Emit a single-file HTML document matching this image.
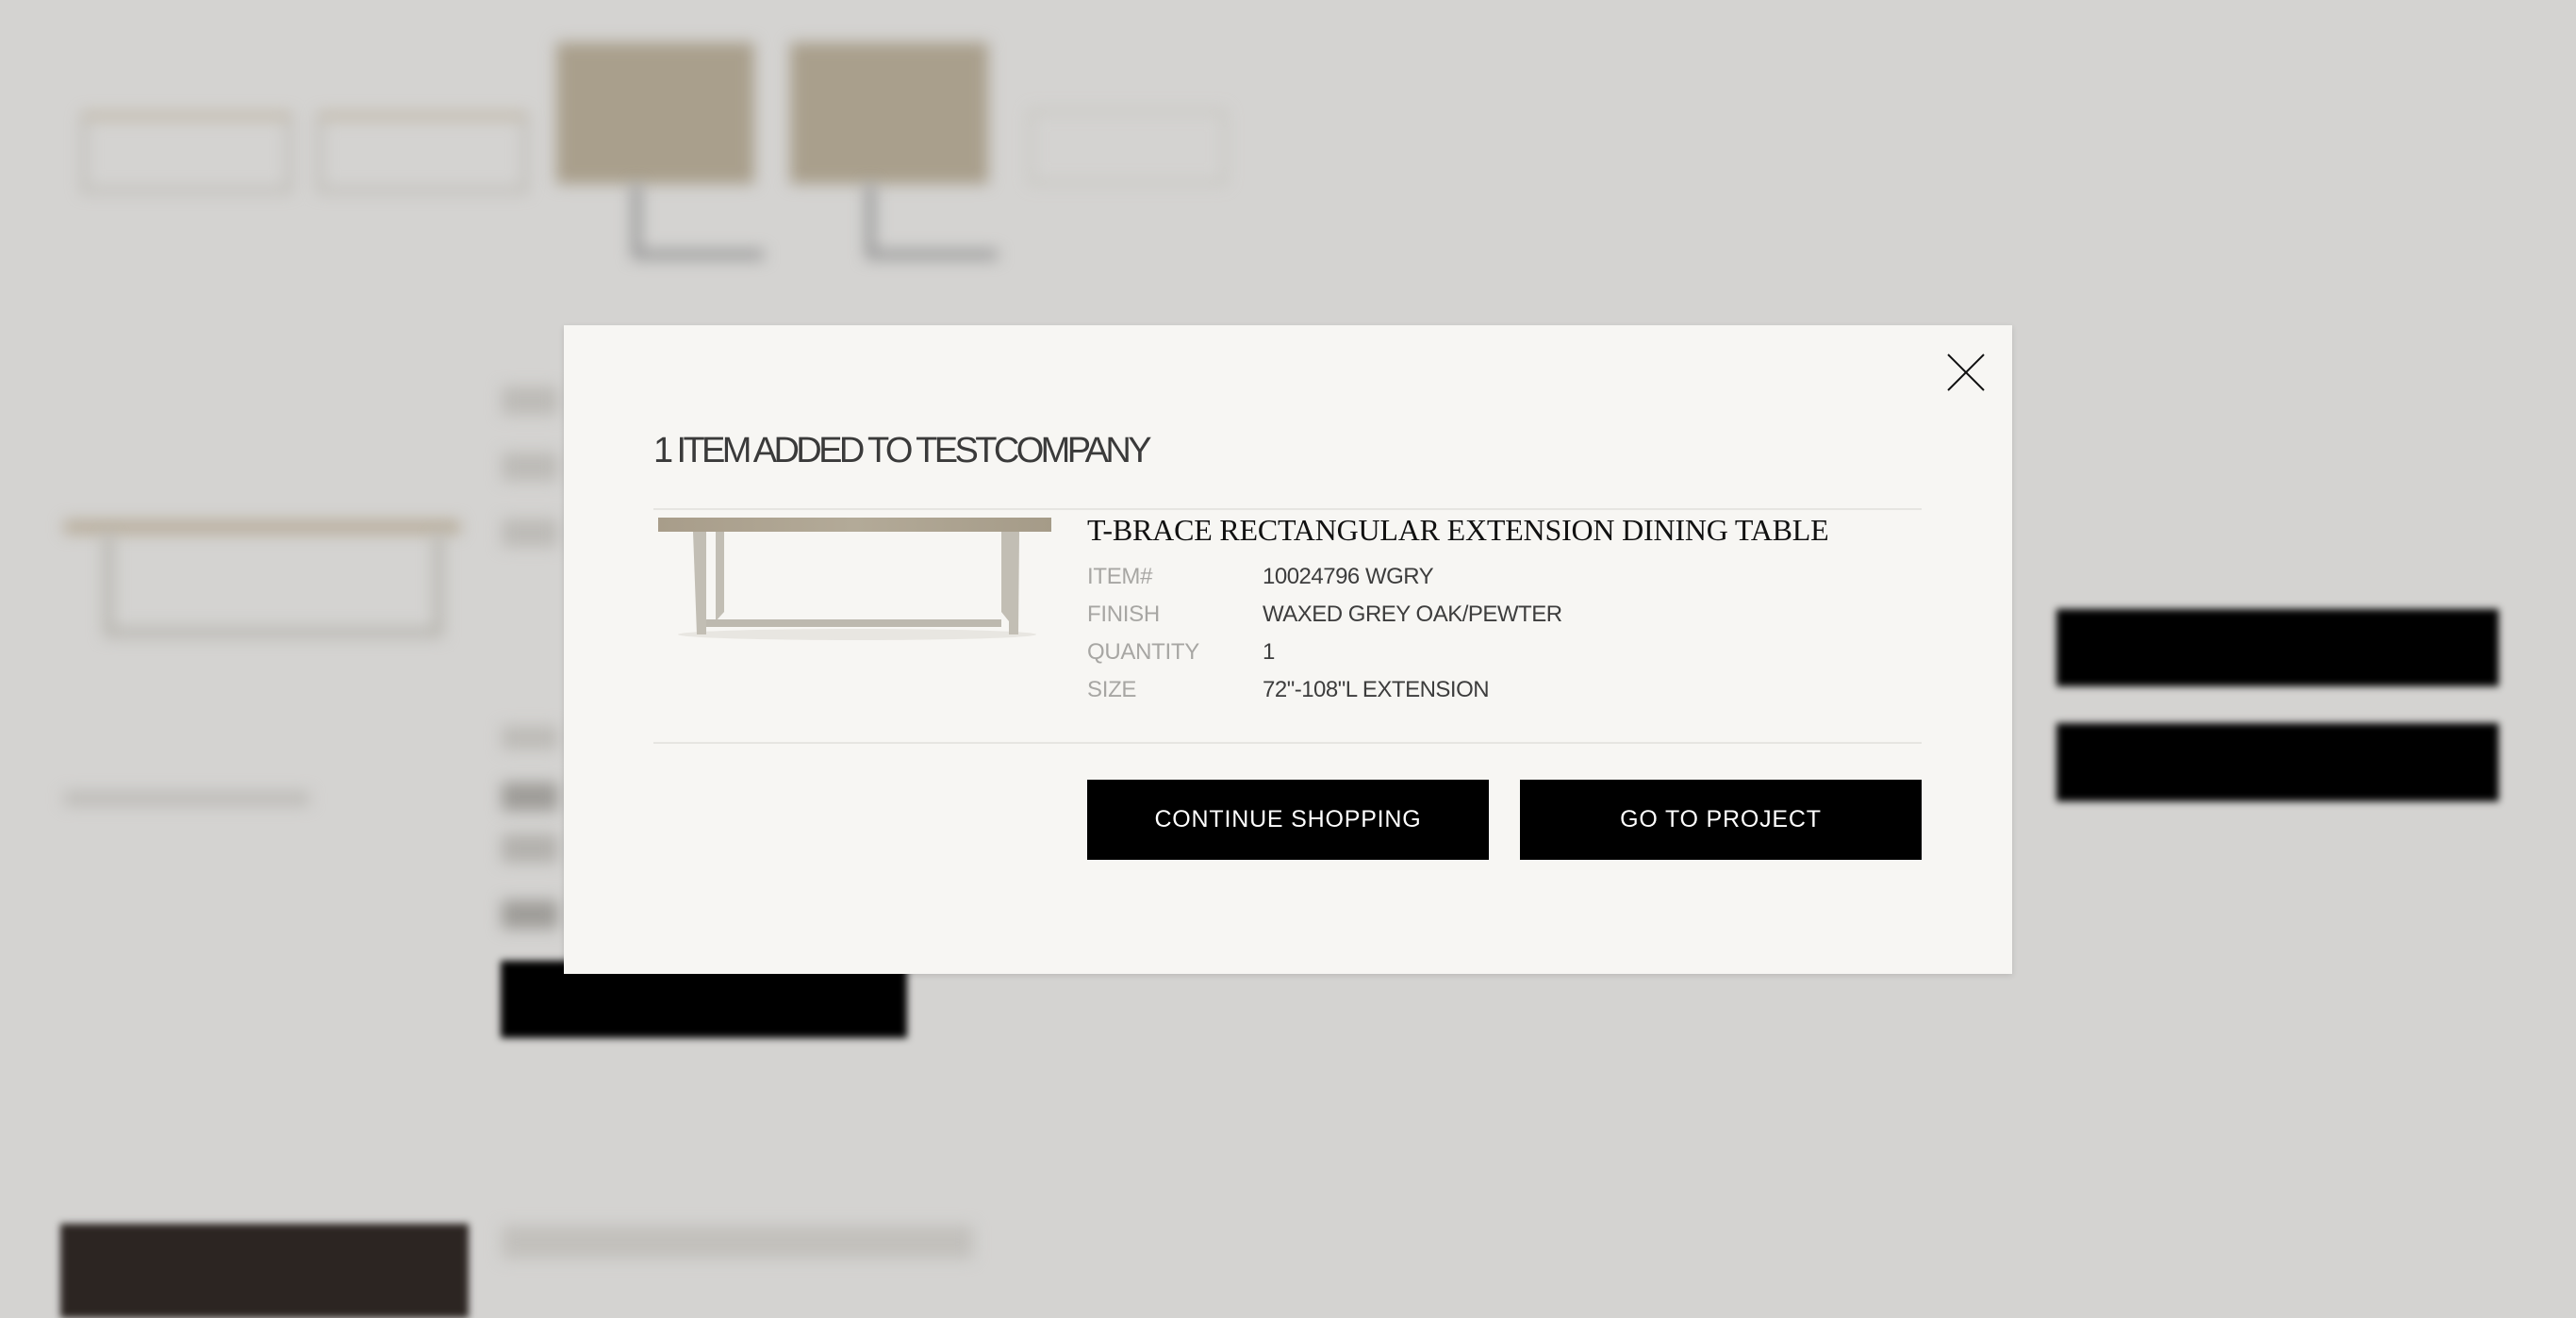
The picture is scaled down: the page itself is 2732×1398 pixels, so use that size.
<!DOCTYPE html>
<html><head><meta charset="utf-8"><style>
html,body{margin:0;padding:0;width:2732px;height:1378px;overflow:hidden;background:#d4d3d1;font-family:"Liberation Sans",sans-serif;}
.bg{position:absolute;filter:blur(8px);}
.modal{position:absolute;left:598px;top:345px;width:1536px;height:688px;background:#f7f6f3;box-shadow:0 2px 6px rgba(0,0,0,0.12);}
.t{position:absolute;white-space:nowrap;}
.lbl{color:#a7a6a3;font-size:24px;letter-spacing:-0.3px;}
.val{color:#3d3d3d;font-size:24px;letter-spacing:-0.5px;}
.btn{position:absolute;top:481px;height:85px;background:#000;color:#fff;font-size:25px;letter-spacing:0.8px;display:flex;align-items:center;justify-content:center;}
</style></head><body>
<div class="bg" style="left:85px;top:118px;width:210px;height:70px;border:8px solid #b8b5ae;border-top:10px solid #b9ad98;opacity:.6"></div>
<div class="bg" style="left:335px;top:118px;width:210px;height:70px;border:8px solid #b8b5ae;border-top:10px solid #b9ad98;opacity:.6"></div>
<div class="bg" style="left:590px;top:45px;width:210px;height:150px;background:#a99f8c;"></div>
<div class="bg" style="left:670px;top:195px;width:130px;height:70px;border-left:10px solid #999;border-bottom:10px solid #999;"></div>
<div class="bg" style="left:838px;top:45px;width:210px;height:150px;background:#a99f8c;"></div>
<div class="bg" style="left:918px;top:195px;width:130px;height:70px;border-left:10px solid #999;border-bottom:10px solid #999;"></div>
<div class="bg" style="left:1090px;top:115px;width:200px;height:70px;border:6px solid #c5c3bd;opacity:.7"></div>
<div class="bg" style="left:68px;top:552px;width:420px;height:14px;background:#b6ab98;"></div>
<div class="bg" style="left:110px;top:566px;width:340px;height:100px;border:10px solid #b8b6b0;border-top:none;"></div>
<div class="bg" style="left:68px;top:840px;width:260px;height:14px;background:#bcbab6;"></div>
<div class="bg" style="left:532px;top:410px;width:60px;height:30px;background:#bdbbb7;"></div>
<div class="bg" style="left:532px;top:480px;width:60px;height:30px;background:#bdbbb7;"></div>
<div class="bg" style="left:532px;top:550px;width:60px;height:30px;background:#bdbbb7;"></div>
<div class="bg" style="left:532px;top:770px;width:60px;height:25px;background:#bdbbb7;"></div>
<div class="bg" style="left:532px;top:830px;width:60px;height:30px;background:#9e9c98;"></div>
<div class="bg" style="left:532px;top:885px;width:60px;height:30px;background:#b3b1ad;"></div>
<div class="bg" style="left:532px;top:955px;width:60px;height:30px;background:#9e9c98;"></div>
<div class="bg" style="left:531px;top:1019px;width:431px;height:82px;background:#000;filter:blur(4px);"></div>
<div class="bg" style="left:2181px;top:646px;width:469px;height:82px;background:#000;filter:blur(4px);"></div>
<div class="bg" style="left:2181px;top:767px;width:469px;height:83px;background:#000;filter:blur(4px);"></div>
<div class="bg" style="left:64px;top:1298px;width:433px;height:100px;background:#2c2522;filter:blur(4px);"></div>
<div class="bg" style="left:532px;top:1300px;width:500px;height:35px;background:#c2c0bc;"></div>

<div class="modal">
  <svg style="position:absolute;left:1466px;top:29px" width="42" height="42" viewBox="0 0 42 42"><path d="M2 2L40 40M40 2L2 40" stroke="#111" stroke-width="2" fill="none"/></svg>
  <div class="t" style="left:95px;top:112px;font-size:38px;color:#3a3a3a;letter-spacing:-3.6px;">1 ITEM ADDED TO TESTCOMPANY</div>
  <div style="position:absolute;left:95px;top:194px;width:1345px;height:2px;background:#e6e5e1"></div>
  <svg style="position:absolute;left:99px;top:200px" width="424" height="135" viewBox="0 0 424 135">
    <defs><linearGradient id="w" x1="0" y1="0" x2="1" y2="0"><stop offset="0" stop-color="#a89d8a"/><stop offset=".5" stop-color="#b3aa98"/><stop offset="1" stop-color="#a59b88"/></linearGradient></defs>
    <ellipse cx="212" cy="128" rx="190" ry="6" fill="#e8e6e1"/>
    <rect x="1" y="4" width="417" height="15" fill="url(#w)"/>
    <path d="M38 19L52 19L52 128L42 128Z M62 19L71 19L71 104L62 114Z" fill="#c2beb4"/>
    <path d="M373 19L384 19L383 128L373 128Z M365 19L374 19L373 114L365 104Z" fill="#c2beb4"/>
    <rect x="52" y="112" width="313" height="8" fill="#bdb9af"/>
  </svg>
  <div class="t" style="left:555px;top:199px;font-family:'Liberation Serif',serif;font-size:32px;color:#111;letter-spacing:-0.2px;">T-BRACE RECTANGULAR EXTENSION DINING TABLE</div>
  <div class="t lbl" style="left:555px;top:253px">ITEM#</div><div class="t val" style="left:741px;top:253px">10024796 WGRY</div>
  <div class="t lbl" style="left:555px;top:293px">FINISH</div><div class="t val" style="left:741px;top:293px">WAXED GREY OAK/PEWTER</div>
  <div class="t lbl" style="left:555px;top:333px">QUANTITY</div><div class="t val" style="left:741px;top:333px">1</div>
  <div class="t lbl" style="left:555px;top:373px">SIZE</div><div class="t val" style="left:741px;top:373px">72"-108"L EXTENSION</div>
  <div style="position:absolute;left:95px;top:442px;width:1345px;height:2px;background:#e6e5e1"></div>
  <div class="btn" style="left:555px;width:426px;top:482px;">CONTINUE SHOPPING</div>
  <div class="btn" style="left:1014px;width:426px;top:482px;">GO TO PROJECT</div>
</div>
</body></html>
